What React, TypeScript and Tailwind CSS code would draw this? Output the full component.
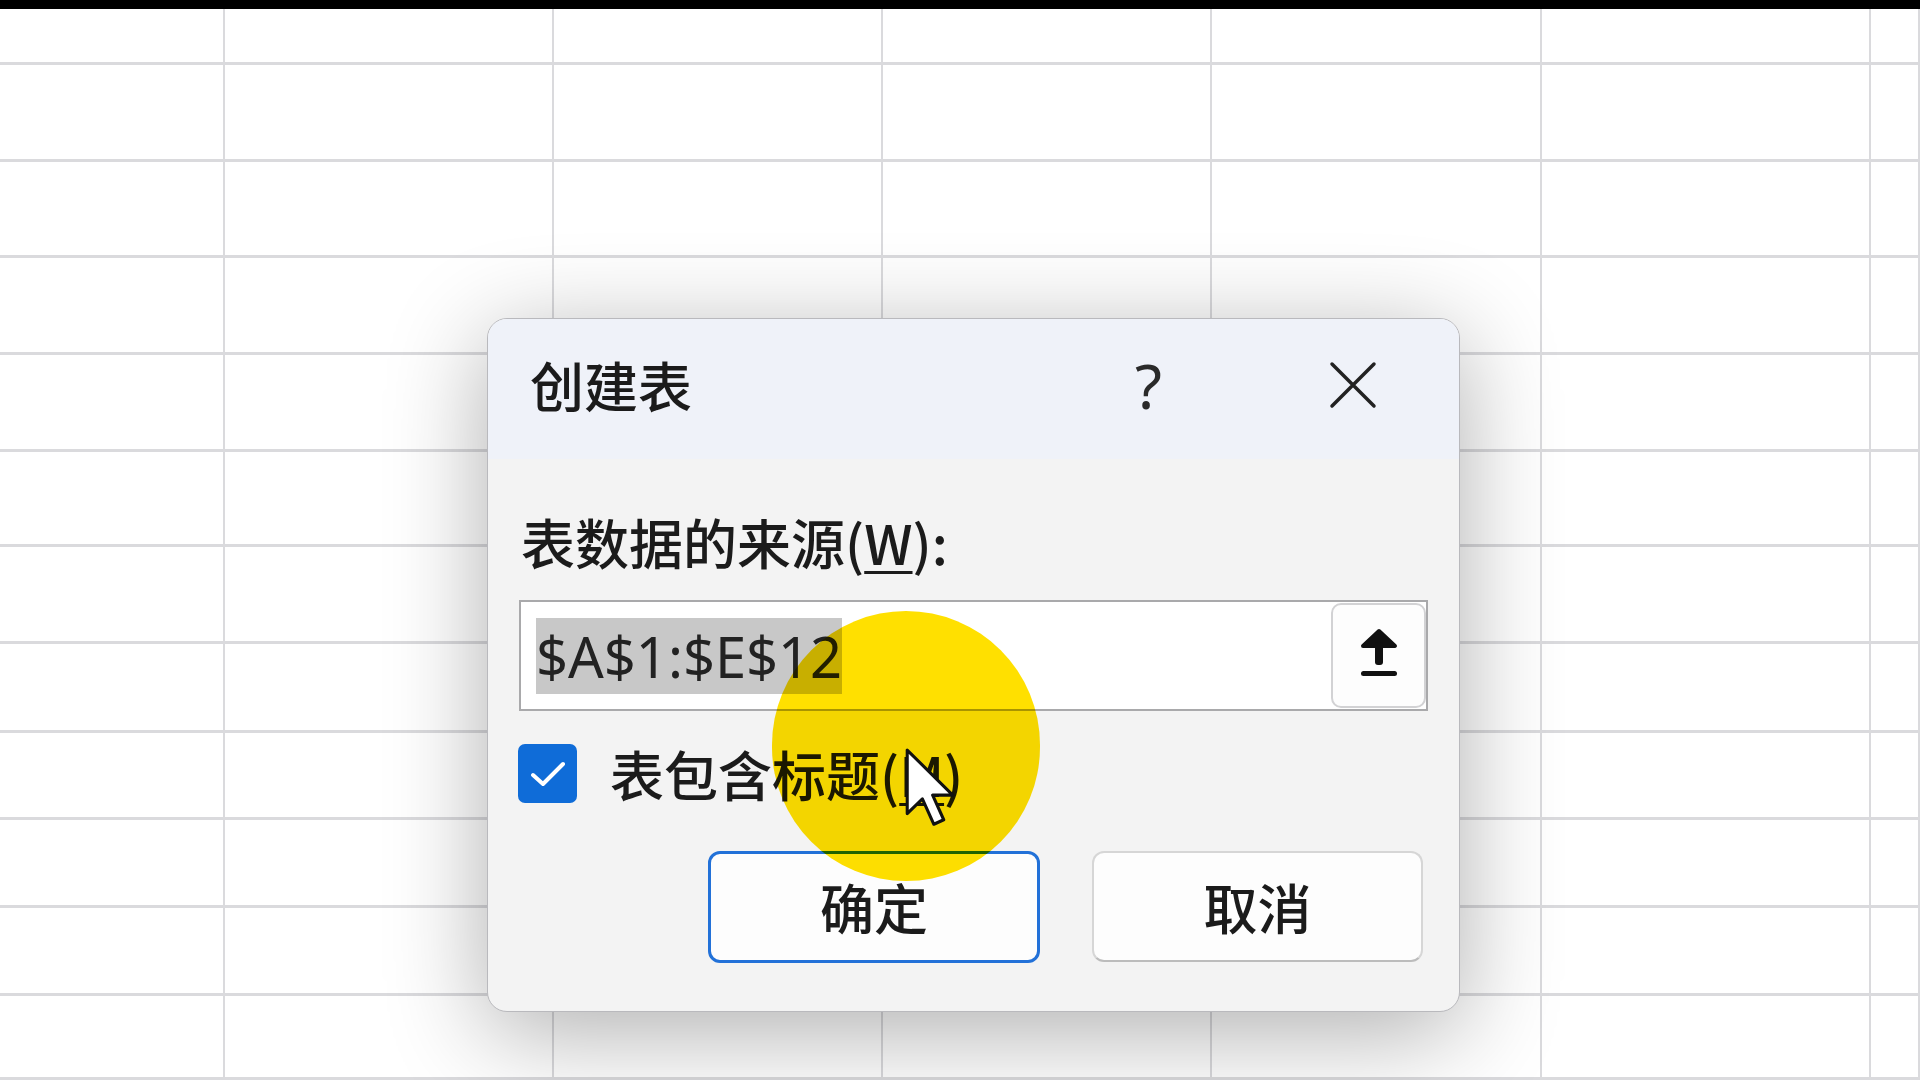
import { Fragment } from "react";

const colWidths = ["w-[225px]", "", "", "", "", "", ""];
const rowHeights = [56, 97, 96, 97, 97, 95, 97, 89, 87, 88, 88];

function UploadIcon() {
  return (
    <svg width="38" height="48" viewBox="0 0 38 48" fill="none">
      <polygon
        points="19,3 35,18 3,18"
        fill="#111"
        stroke="#111"
        strokeWidth="4"
        strokeLinejoin="round"
      />
      <rect x="15" y="14" width="8" height="23" rx="3" fill="#111" />
      <rect x="1" y="43" width="36" height="5" rx="2.5" fill="#111" />
    </svg>
  );
}

function CloseIcon() {
  return (
    <svg width="48" height="48" viewBox="0 0 48 48" fill="none">
      <path d="M3 3 L45 45 M45 3 L3 45" stroke="#222" strokeWidth="3.5" strokeLinecap="round" />
    </svg>
  );
}

function Cursor() {
  return (
    <svg width="52" height="82" viewBox="0 0 12.6 20" fill="none">
      <path
        d="M0.5 0.5 L0.5 16 L4.2 12.4 L7 18.6 L9.4 17.5 L6.7 11.5 L11.6 11.5 Z"
        fill="#fff"
        stroke="#111"
        strokeWidth="0.75"
        strokeLinejoin="round"
      />
    </svg>
  );
}

export default function App() {
  return (
    <div className="relative w-[1920px] h-[1080px] overflow-hidden bg-white flex flex-col">
      <div className="h-[9px] bg-black shrink-0" />

      {/* sheet grid */}
      <div className="grid flex-1 grid-cols-[225px_329px_329px_329px_330px_329px_1fr] grid-rows-[56px_97px_96px_97px_97px_95px_97px_89px_87px_88px_88px_1fr]">
        {[...rowHeights, 0].map((_, r) => (
          <Fragment key={r}>
            {colWidths.map((_, c) => (
              <div key={c} className="border-r-2 border-b-[3px] border-[#dadadd]" />
            ))}
          </Fragment>
        ))}
      </div>

      {/* Create table dialog */}
      <div className="absolute left-[487px] top-[318px] w-[973px] flex flex-col rounded-[20px] border border-[#b9b9bd] bg-[#f3f3f3] shadow-[0_20px_100px_rgba(0,0,0,0.32)] overflow-hidden font-['Noto_Sans_CJK_SC',sans-serif] font-medium text-[#1b1b1b]">
        <div className="h-[140px] flex items-center pl-[42px] pr-[82px] pb-[8px] bg-[#eff2f9]">
          <span className="text-[54px] leading-none flex-1">创建表</span>
          <span className="text-[62px] leading-none font-['Noto_Sans',sans-serif] font-normal text-[#2a2a2a] mr-[167px]">?</span>
          <CloseIcon />
        </div>

        <div className="flex flex-col px-[31px] pt-[48px] pb-[48px]">
          <div className="h-[70px] flex items-center pl-[2px] text-[54px] leading-none">
            表数据的来源(<span className="underline underline-offset-[6px] decoration-[3px]">W</span>):
          </div>

          <div className="mt-[23px] h-[111px] flex items-center border-2 border-[#a9a9ab] bg-white">
            <div className="flex-1 pl-[15px]">
              <span className="inline-block h-[76px] leading-[76px] bg-[#c8c8c8] text-[56px] font-['Noto_Sans',sans-serif] font-normal text-[#222]">
                $A$1:$E$12
              </span>
            </div>
            <div className="w-[95px] self-stretch my-[1px] flex items-center justify-center pb-[8px] bg-[#fdfdfd] border-2 border-[#d2d2d4] rounded-[10px]">
              <UploadIcon />
            </div>
          </div>

          <div className="mt-[33px] h-[59px] flex items-center">
            <div className="w-[59px] h-[59px] -ml-[1px] rounded-[7px] bg-[#0f6cd8] flex items-center justify-center">
              <svg width="38" height="30" viewBox="0 0 38 30" fill="none">
                <path d="M4 16 L14 25 L34 5" stroke="#fff" strokeWidth="4" strokeLinecap="round" strokeLinejoin="round" />
              </svg>
            </div>
            <span className="ml-[33px] text-[54px] leading-none">
              表包含标题(<span className="underline underline-offset-[6px] decoration-[3px]">M</span>)
            </span>
          </div>

          <div className="mt-[48px] flex justify-end gap-[52px] pr-[5px]">
            <button className="w-[332px] h-[112px] rounded-[12px] border-[3px] border-[#2271d8] bg-[#fdfdfd] text-[54px] leading-none">
              确定
            </button>
            <button className="w-[331px] h-[111px] rounded-[12px] border-2 border-[#d6d6d6] border-b-[#bcbcbc] bg-[#fdfdfd] text-[54px] leading-none">
              取消
            </button>
          </div>
        </div>
      </div>

      {/* click highlight */}
      <div className="absolute left-[772px] top-[611px] w-[268px] h-[270px] rounded-full bg-[#ffe000] mix-blend-multiply" />
      <div className="absolute left-[905px] top-[748px]">
        <Cursor />
      </div>
    </div>
  );
}
